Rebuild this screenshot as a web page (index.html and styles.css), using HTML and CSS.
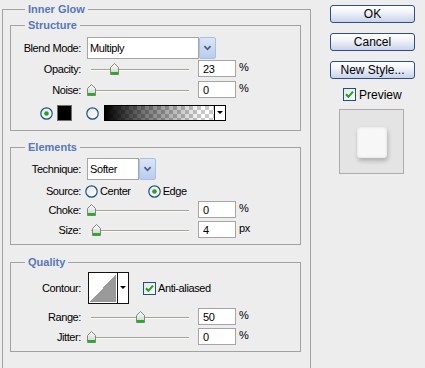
FILE: index.html
```html
<!DOCTYPE html>
<html lang="en">
<head>
    <meta charset="UTF-8">
    <meta name="viewport" content="width=device-width, initial-scale=1.0">
    <title>Layer Style - Inner Glow</title>
    <link rel="stylesheet" href="styles.css">
</head>
<body>
    <svg class="defs" width="0" height="0" aria-hidden="true">
        <defs>
            <linearGradient id="thumbFill" x1="0" y1="0" x2="0" y2="1">
                <stop offset="0" stop-color="#ffffff"/>
                <stop offset="1" stop-color="#c9d0c9"/>
            </linearGradient>
            <linearGradient id="boxFill" x1="0" y1="0" x2="1" y2="1">
                <stop offset="0" stop-color="#e4e4e0"/>
                <stop offset="1" stop-color="#ffffff"/>
            </linearGradient>
            <symbol id="thumb" viewBox="0 0 9 12">
                <path d="M0.5 4.5 L4.5 0.5 L8.5 4.5 L8.5 11.5 L0.5 11.5 Z" fill="url(#thumbFill)" stroke="#7d877d"/>
                <rect x="1" y="9" width="7" height="2.5" fill="#22b022"/>
            </symbol>
            <symbol id="chev" viewBox="0 0 17 22">
                <path d="M5 9 L8.5 12.5 L12 9" fill="none" stroke="#4d5f86" stroke-width="2"/>
            </symbol>
            <symbol id="radio" viewBox="0 0 13 13">
                <circle cx="6.5" cy="6.5" r="5.7" fill="url(#boxFill)" stroke="#1c5180" stroke-width="1.2"/>
            </symbol>
            <symbol id="radioOn" viewBox="0 0 13 13">
                <circle cx="6.5" cy="6.5" r="5.7" fill="url(#boxFill)" stroke="#1c5180" stroke-width="1.2"/>
                <circle cx="6.5" cy="6.5" r="2.3" fill="#21a121"/>
            </symbol>
            <symbol id="check" viewBox="0 0 13 13">
                <rect x="0.5" y="0.5" width="12" height="12" fill="url(#boxFill)" stroke="#1c5180"/>
                <path d="M3 6.2 L5.4 8.8 L10 3.6" fill="none" stroke="#21a121" stroke-width="2"/>
            </symbol>
        </defs>
    </svg>

    <div class="dialog">
        <fieldset class="group outer">
            <legend>Inner Glow</legend>

            <fieldset class="group structure">
                <legend>Structure</legend>

                <div class="row row-select">
                    <span class="lbl">Blend Mode:</span>
                    <div class="select">
                        <span class="field blend">Multiply</span>
                        <span class="drop"><svg><use href="#chev"/></svg></span>
                    </div>
                </div>

                <div class="row row-num first">
                    <span class="lbl">Opacity:</span>
                    <div class="slider"><span class="thumb" style="left: calc(23% - 4px)"><svg><use href="#thumb"/></svg></span></div>
                    <input class="num" type="text" value="23"><span class="unit">%</span>
                </div>

                <div class="row row-num gap4">
                    <span class="lbl">Noise:</span>
                    <div class="slider"><span class="thumb" style="left: calc(0% - 4px)"><svg><use href="#thumb"/></svg></span></div>
                    <input class="num" type="text" value="0"><span class="unit">%</span>
                </div>

                <div class="row row-color">
                    <svg class="radio solid-radio"><use href="#radioOn"/></svg>
                    <span class="swatch"></span>
                    <svg class="radio grad-radio"><use href="#radio"/></svg>
                    <span class="gradient">
                        <span class="ramp"></span>
                        <span class="mini-drop"></span>
                    </span>
                </div>
            </fieldset>

            <fieldset class="group elements">
                <legend>Elements</legend>

                <div class="row row-select">
                    <span class="lbl">Technique:</span>
                    <div class="select">
                        <span class="field technique">Softer</span>
                        <span class="drop"><svg><use href="#chev"/></svg></span>
                    </div>
                </div>

                <div class="row row-source">
                    <span class="lbl">Source:</span>
                    <svg class="radio src-center"><use href="#radio"/></svg>
                    <span class="opt">Center</span>
                    <svg class="radio src-edge"><use href="#radioOn"/></svg>
                    <span class="opt">Edge</span>
                </div>

                <div class="row row-num gap3">
                    <span class="lbl">Choke:</span>
                    <div class="slider"><span class="thumb" style="left: calc(0% - 4px)"><svg><use href="#thumb"/></svg></span></div>
                    <input class="num" type="text" value="0"><span class="unit">%</span>
                </div>

                <div class="row row-num gap3">
                    <span class="lbl">Size:</span>
                    <div class="slider"><span class="thumb" style="left: calc(4.6% - 4px)"><svg><use href="#thumb"/></svg></span></div>
                    <input class="num" type="text" value="4"><span class="unit">px</span>
                </div>
            </fieldset>

            <fieldset class="group quality">
                <legend>Quality</legend>

                <div class="row row-contour">
                    <span class="lbl">Contour:</span>
                    <span class="contour">
                        <span class="curve"></span>
                        <span class="mini-drop"></span>
                    </span>
                    <svg class="checkbox aa"><use href="#check"/></svg>
                    <span class="opt">Anti-aliased</span>
                </div>

                <div class="row row-num gap4">
                    <span class="lbl">Range:</span>
                    <div class="slider"><span class="thumb" style="left: calc(50% - 4px)"><svg><use href="#thumb"/></svg></span></div>
                    <input class="num" type="text" value="50"><span class="unit">%</span>
                </div>

                <div class="row row-num gap3">
                    <span class="lbl">Jitter:</span>
                    <div class="slider"><span class="thumb" style="left: calc(0% - 4px)"><svg><use href="#thumb"/></svg></span></div>
                    <input class="num" type="text" value="0"><span class="unit">%</span>
                </div>
            </fieldset>
        </fieldset>

        <div class="side">
            <button class="btn">OK</button>
            <button class="btn">Cancel</button>
            <button class="btn">New Style...</button>
            <div class="preview-toggle">
                <svg class="checkbox"><use href="#check"/></svg>
                <span>Preview</span>
            </div>
            <div class="preview">
                <span class="sample"></span>
            </div>
        </div>
    </div>
</body>
</html>
```

FILE: styles.css
```css
:root {
    --dialog-bg: #ededed;
    --line-color: #a2a2a2;
    --legend-color: #5877bb;
    --field-border: #a5a5a5;
}

* {
    box-sizing: border-box;
    margin: 0;
    padding: 0;
}

html,
body {
    overflow: hidden;
}

body {
    background-color: var(--dialog-bg);
    font-family: "Liberation Sans", Arial, sans-serif;
    font-size: 11px;
    letter-spacing: -0.4px;
    color: #000;
}

.defs {
    position: absolute;
    width: 0;
    height: 0;
}

.dialog {
    display: flex;
    align-items: flex-start;
}

/* group boxes */
.group {
    border: 1px solid var(--line-color);
    min-width: 0;
}

.group > legend {
    font-weight: bold;
    color: var(--legend-color);
    line-height: 13px;
    padding: 0 3px;
    letter-spacing: 0;
}

.outer {
    width: 309px;
    height: 400px;
    margin: 3px 0 0 2px;
    padding: 3px 10px 0 7px;
}

.outer > legend {
    margin-left: 15px;
}

.structure,
.elements,
.quality {
    width: 291px;
    padding: 0;
}

.structure > legend,
.elements > legend,
.quality > legend {
    margin-left: 14px;
}

.structure {
    padding-top: 5px;
    padding-bottom: 9px;
}

.elements {
    margin-top: 10px;
    padding-top: 4px;
    padding-bottom: 6px;
}

.quality {
    margin-top: 11px;
    padding-top: 3px;
    padding-bottom: 6px;
}

/* rows */
.row {
    display: flex;
    align-items: center;
}

.lbl {
    width: 70px;
    text-align: right;
    flex-shrink: 0;
}

.row-select {
    height: 22px;
}

.row-num {
    height: 17px;
}

.row-num.first {
    margin-top: 1px;
}

.gap3 {
    margin-top: 3px;
}

.gap4 {
    margin-top: 4px;
}

/* combo boxes */
.select {
    display: flex;
    margin-left: 6px;
    height: 22px;
}

.field {
    border: 1px solid var(--field-border);
    background: #fff;
    line-height: 20px;
    padding-left: 2px;
}

.field.blend {
    width: 112px;
}

.field.technique {
    width: 52px;
}

.drop {
    width: 17px;
    height: 22px;
    border: 1px solid #a9bfe4;
    border-radius: 2px;
    background: linear-gradient(#dbe5f7, #b9cced);
}

.drop svg {
    display: block;
    width: 15px;
    height: 20px;
}

/* sliders */
.slider {
    position: relative;
    width: 98px;
    height: 12px;
    margin: 0 9px 0 10px;
    flex-shrink: 0;
}

.slider::before {
    content: "";
    position: absolute;
    left: 0;
    right: 0;
    top: 6px;
    height: 1px;
    background: #a4a499;
    box-shadow: 0 1px 0 #fbfbf6;
}

.thumb {
    position: absolute;
    top: 0;
    width: 9px;
    height: 12px;
}

.thumb svg {
    display: block;
    width: 9px;
    height: 12px;
}

.num {
    width: 38px;
    height: 17px;
    border: 1px solid var(--field-border);
    background: #fff;
    font: inherit;
    letter-spacing: inherit;
    padding-left: 4px;
    color: #000;
    outline: none;
}

.unit {
    margin-left: 3px;
    align-self: flex-start;
    line-height: 14px;
}

/* colour row */
.row-color {
    height: 16px;
    margin-top: 7px;
}

.radio,
.checkbox {
    width: 13px;
    height: 13px;
    flex-shrink: 0;
}

.solid-radio {
    margin-left: 29px;
}

.swatch {
    width: 15px;
    height: 16px;
    margin-left: 4px;
    background: #000;
    border: 1px solid #6f6f6f;
}

.grad-radio {
    margin-left: 14px;
}

.gradient {
    display: flex;
    width: 122px;
    height: 16px;
    margin-left: 5px;
    border: 1px solid #000;
}

.ramp {
    flex: 1;
    background:
        linear-gradient(to right, #000 0%, rgba(0, 0, 0, 0.55) 35%, rgba(0, 0, 0, 0) 90%),
        repeating-conic-gradient(#c9c9c9 0 25%, #fff 0 50%) 0 0 / 8px 8px;
}

.mini-drop {
    position: relative;
    width: 11px;
    border-left: 1px solid #000;
    background: #fff;
}

.mini-drop::after {
    content: "";
    position: absolute;
    left: 2px;
    top: 50%;
    margin-top: -2px;
    border-left: 3px solid transparent;
    border-right: 3px solid transparent;
    border-top: 3px solid #000;
}

/* source row */
.row-source {
    height: 14px;
    margin-top: 4px;
}

.src-center {
    margin-left: 4px;
}

.opt {
    margin-left: 2px;
}

.src-edge {
    margin-left: 17px;
}

/* contour row */
.row-contour {
    height: 32px;
}

.contour {
    display: flex;
    width: 41px;
    height: 32px;
    margin-left: 7px;
    border: 1px solid #111;
    background: #fff;
}

.curve {
    flex: 1;
    margin: 1px;
    background: linear-gradient(to bottom right, #fff 50%, #9a9a9a 50%);
}

.contour .mini-drop {
    border-left: 1px solid #111;
}

.aa {
    margin-left: 14px;
}

/* right column */
.side {
    width: 85px;
    margin-left: 19px;
    padding-top: 5px;
}

.btn {
    display: block;
    width: 85px;
    height: 18px;
    margin-bottom: 10px;
    border: 1px solid #2d4d8e;
    border-radius: 3px;
    background: linear-gradient(#ffffff 0%, #f3f5fa 35%, #c8d3ea 100%);
    font-family: "Liberation Sans", Arial, sans-serif;
    font-size: 12px;
    letter-spacing: 0;
    line-height: 16px;
    color: #000;
    cursor: pointer;
}

.preview-toggle {
    display: flex;
    align-items: center;
    gap: 3px;
    height: 13px;
    margin: -1px 0 0 13px;
    font-size: 12px;
    letter-spacing: 0;
}

.preview {
    display: flex;
    width: 65px;
    height: 65px;
    margin: 8px 0 0 9px;
    padding: 17px 0 0 17px;
    border: 1px solid #acacac;
    background: #e4e4e4;
}

.sample {
    width: 30px;
    height: 31px;
    border-radius: 3px;
    background: #f7f7f7;
    box-shadow: 1px 3px 4px rgba(0, 0, 0, 0.22), inset 0 0 3px rgba(0, 0, 0, 0.12);
}
```
